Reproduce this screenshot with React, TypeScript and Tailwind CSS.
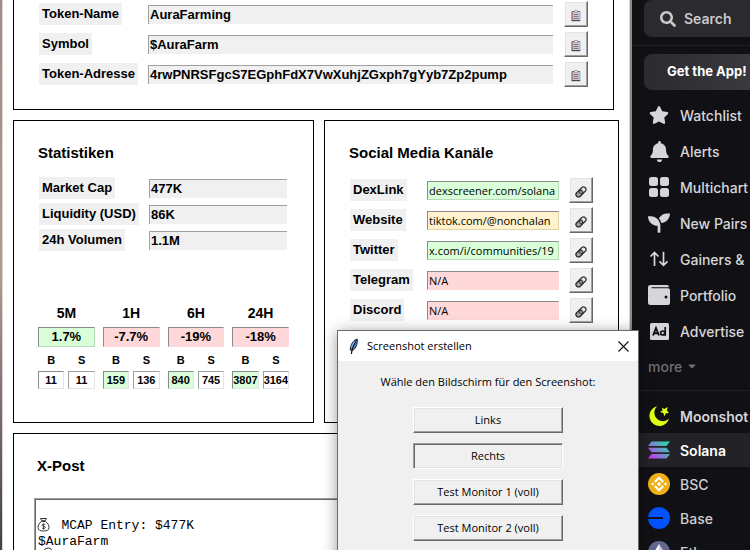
import React from "react";
import type { ReactNode } from "react";
import { FaSearch, FaStar, FaBell, FaSeedling, FaCaretDown } from "react-icons/fa";

const LABEL = "justify-self-start whitespace-nowrap bg-[#f0f0f0] px-[3px] text-[13px] leading-[22px] font-bold";
const FIELD = "h-[19px] w-full min-w-0 border-t border-l border-[#a0a0a0] bg-[#f0f0f0] px-px text-[13px] leading-[18px] font-bold outline-none";
const RAISED =
  "flex items-center justify-center bg-[#f0f0f0] border border-t-white border-l-white border-r-[#696969] border-b-[#696969] shadow-[inset_-1px_-1px_0_#a0a0a0,inset_1px_1px_0_#e3e3e3]";
const SUNKEN =
  "flex items-center justify-center bg-[#f0f0f0] border border-t-[#a0a0a0] border-l-[#a0a0a0] border-r-white border-b-white shadow-[inset_1px_1px_0_#696969,inset_-1px_-1px_0_#e3e3e3]";
const HEADING = "text-[15px] leading-5 font-bold";

function ClipboardIcon() {
  return (
    <svg width="10" height="12" viewBox="0 0 10 12" fill="none" aria-hidden="true">
      <path d="M1 2h8v9H1z" fill="#d3c6cd" />
      <path d="M1 1.500v9.500" stroke="#7b4a45" />
      <path d="M9 1.500v9.500" stroke="#7fb4e4" />
      <path d="M1 1.500h8" stroke="#76707a" />
      <path d="M3.500.500h3v2h-3z" fill="#f0f0f0" stroke="#8a8690" strokeWidth="0.700" />
      <path d="M2.500 4.500h5M2.500 6.500h5M2.500 8.500h5" stroke="#77707c" strokeWidth="0.900" />
      <path d="M1 10.700h8" stroke="#2a2a33" />
    </svg>
  );
}

function LinkIcon() {
  return (
    <svg width="12" height="12" viewBox="0 0 12 12" fill="none" aria-hidden="true">
      <g transform="rotate(-45 6 6)">
        <rect x="0" y="3.500" width="7.500" height="5" rx="2.500" fill="#a9a39c" stroke="#2a2a2e" strokeWidth="1.300" />
        <rect x="4.500" y="3.500" width="7.500" height="5" rx="2.500" stroke="#37332f" strokeWidth="1.300" />
        <path d="M3 6h6" stroke="#7a8ea0" strokeWidth="1.100" />
      </g>
    </svg>
  );
}

const token = [
  { id: "name", label: "Token-Name", value: "AuraFarming" },
  { id: "symbol", label: "Symbol", value: "$AuraFarm" },
  { id: "address", label: "Token-Adresse", value: "4rwPNRSFgcS7EGphFdX7VwXuhjZGxph7gYyb7Zp2pump" },
];

function TokenPanel() {
  return (
    <section className="mr-[5px] flex flex-col gap-1 border-x border-b border-black pt-px pr-[25px] pb-[22px] pl-[25px]">
      {token.map((t) => (
        <div key={t.id} className="grid h-[26px] grid-cols-[109px_1fr_35px] items-center">
          <label htmlFor={t.id} className={LABEL}>{t.label}</label>
          <input id={t.id} readOnly value={t.value} className={FIELD} />
          <button type="button" aria-label={`${t.label} kopieren`} className={`${RAISED} h-[26px] w-6 justify-self-end pt-1`}>
            <ClipboardIcon />
          </button>
        </div>
      ))}
    </section>
  );
}

const stats = [
  { id: "mcap", label: "Market Cap", value: "477K" },
  { id: "liq", label: "Liquidity (USD)", value: "86K" },
  { id: "vol", label: "24h Volumen", value: "1.1M" },
];

const periods = [
  { name: "5M", change: "1.7%", up: true, buys: "11", sells: "11", buyLead: false },
  { name: "1H", change: "-7.7%", up: false, buys: "159", sells: "136", buyLead: true },
  { name: "6H", change: "-19%", up: false, buys: "840", sells: "745", buyLead: true },
  { name: "24H", change: "-18%", up: false, buys: "3807", sells: "3164", buyLead: true },
];

function StatsPanel() {
  return (
    <section className="border border-black px-6 pt-[22px] pb-[33px]">
      <h2 className={HEADING}>Statistiken</h2>
      <div className="mt-[14px] flex flex-col gap-1 pr-[2px] pl-px">
        {stats.map((s) => (
          <div key={s.id} className="grid grid-cols-[110px_1fr] items-center">
            <label htmlFor={s.id} className={LABEL}>{s.label}</label>
            <input id={s.id} readOnly value={s.value} className={FIELD} />
          </div>
        ))}
      </div>
      <div className="mt-[53px] grid grid-cols-4 gap-2 text-center font-bold">
        {periods.map((p) => (
          <div key={p.name} className="min-w-0">
            <h3 className="text-[14px] leading-[18px]">{p.name}</h3>
            <output
              className={`mt-[5px] block h-5 border border-t-[#8b8b8b] border-l-[#8b8b8b] text-[13px] leading-[18px] ${
                p.up ? "border-r-[#b8dcb8] border-b-[#b8dcb8] bg-[#d9ffd9]" : "border-r-[#ffd9d9] border-b-[#ffd9d9] bg-[#ffd9d9]"
              }`}
            >
              {p.change}
            </output>
            <div className="mt-[5px] grid grid-cols-2 gap-x-1 text-[11px]">
              <span className="leading-4">B</span>
              <span className="leading-4">S</span>
              <output
                className={`mt-[3px] h-[18px] overflow-hidden border border-t-[#8b8b8b] border-l-[#8b8b8b] border-r-[#e3e3e3] border-b-[#e3e3e3] leading-4 ${
                  p.buyLead ? "bg-[#d9ffd9]" : "bg-white"
                }`}
              >
                {p.buys}
              </output>
              <output className="mt-[3px] h-[18px] overflow-hidden border border-t-[#a0a0a0] border-l-[#a0a0a0] border-r-[#e3e3e3] border-b-[#e3e3e3] bg-white leading-4">
                {p.sells}
              </output>
            </div>
          </div>
        ))}
      </div>
    </section>
  );
}

const socials = [
  { id: "dex", label: "DexLink", value: "dexscreener.com/solana", tone: "bg-[#d9ffd9] border-r-[#b8dcb8] border-b-[#b8dcb8]" },
  { id: "web", label: "Website", value: "tiktok.com/@nonchalan", tone: "bg-[#fff2cc] border-r-[#e0d3a8] border-b-[#e0d3a8]" },
  { id: "tw", label: "Twitter", value: "x.com/i/communities/19", tone: "bg-[#d9ffd9] border-r-[#b8dcb8] border-b-[#b8dcb8]" },
  { id: "tg", label: "Telegram", value: "N/A", tone: "bg-[#ffd9d9] border-r-[#ffd9d9] border-b-[#ffd9d9]" },
  { id: "dc", label: "Discord", value: "N/A", tone: "bg-[#ffd9d9] border-r-[#ffd9d9] border-b-[#ffd9d9]" },
];

function SocialPanel() {
  return (
    <section className="border border-black pt-[22px] pr-[25px] pl-6">
      <h2 className={HEADING}>Social Media Kanäle</h2>
      <div className="mt-[14px] flex flex-col gap-1 pl-px">
        {socials.map((s) => (
          <div key={s.id} className="grid h-[26px] grid-cols-[77px_1fr_34px] items-center">
            <label htmlFor={s.id} className={LABEL}>{s.label}</label>
            <input
              id={s.id}
              readOnly
              value={s.value}
              className={`h-[19px] w-full min-w-0 border border-t-[#8b8b8b] border-l-[#8b8b8b] pl-px font-['Open_Sans',sans-serif] text-[11px] leading-[17px] outline-none ${s.tone}`}
            />
            <button type="button" aria-label={`${s.label} öffnen`} className={`${RAISED} h-[26px] w-6 justify-self-end pt-1`}>
              <LinkIcon />
            </button>
          </div>
        ))}
      </div>
    </section>
  );
}

function PostPanel() {
  return (
    <section className="border border-b-0 border-black px-5 pt-[22px]">
      <h2 className={`${HEADING} pl-[3px]`}>X-Post</h2>
      <div className="relative mt-[22px]">
        <textarea
          aria-label="X-Post Text"
          readOnly
          value={"\n   MCAP Entry: $477K\n$AuraFarm"}
          className="block h-40 w-full resize-none border border-[#a0a0a0] px-[3px] py-[3px] font-['Liberation_Mono',monospace] text-[13px] leading-4 shadow-[inset_1px_1px_0_#696969] outline-none"
        />
        <svg className="absolute top-[19px] left-[3px]" width="18" height="48" viewBox="0 0 18 48" fill="none" stroke="#333" aria-hidden="true">
          <path d="M3.500 1.500h6l-1.200 2.200h-3.600z" />
          <path d="M4.500 4.500C2 6 1 8.500 1 10.500 1 13 3 14 6.500 14S12 13 12 10.500C12 8.500 11 6 8.500 4.500z" />
          <path d="M8.300 7.600c-1-.8-3.300-.6-3.300.6 0 1.400 3.300.7 3.300 2.200 0 1.200-2.300 1.400-3.500.5M6.600 6.400v6.200" strokeWidth="0.900" />
          <circle cx="11" cy="36" r="5" />
        </svg>
      </div>
    </section>
  );
}

function Feather() {
  return (
    <svg width="12" height="17" viewBox="0 0 12 17" aria-hidden="true">
      <path d="M9.200 1C5.500 2 2.300 6.500 2.200 12l1.600.8C7.500 11.500 10 6 9.200 1z" fill="#3f7fc8" stroke="#16202c" strokeWidth="0.900" />
      <path d="M8.600 2C6 5.500 4 9.500 3.400 16" stroke="#101010" strokeWidth="1.200" fill="none" />
      <path d="M7 3.500C5 5.500 4 7.500 3.500 9.500" stroke="#a8d0f5" fill="none" />
    </svg>
  );
}

const choices = [
  { text: "Links", pressed: false },
  { text: "Rechts", pressed: true },
  { text: "Test Monitor 1 (voll)", pressed: false },
  { text: "Test Monitor 2 (voll)", pressed: false },
];

function ScreenshotDialog() {
  return (
    <div
      role="dialog"
      aria-labelledby="dialog-title"
      className="absolute top-[330px] left-[337px] h-[300px] w-[302px] border border-[#6b6b6b] bg-[#f0f0f0] font-['Open_Sans',sans-serif] text-[11px] text-black shadow-[0_2px_14px_rgba(0,0,0,0.4)]"
    >
      <div className="flex h-[30px] items-center bg-white pr-[9px] pl-[10px]">
        <Feather />
        <h2 id="dialog-title" className="ml-[7px] flex-1">Screenshot erstellen</h2>
        <button type="button" aria-label="Schließen">
          <svg width="11" height="11" viewBox="0 0 11 11" aria-hidden="true">
            <path d="M.5.5l10 10M10.500.5l-10 10" stroke="#111" strokeWidth="1.100" />
          </svg>
        </button>
      </div>
      <p className="mt-3 text-center leading-[18px]">Wähle den Bildschirm für den Screenshot:</p>
      <div className="mt-4 flex flex-col items-center gap-[10px]">
        {choices.map((c) => (
          <button key={c.text} type="button" className={`${c.pressed ? SUNKEN : RAISED} h-[26px] w-[150px]`}>
            {c.text}
          </button>
        ))}
      </div>
    </div>
  );
}

function GridIcon() {
  return (
    <svg width="20" height="20" viewBox="0 0 20 20" fill="currentColor" aria-hidden="true">
      <rect width="9" height="9" rx="2.500" />
      <rect x="11" width="9" height="9" rx="2.500" />
      <rect y="11" width="9" height="9" rx="2.500" />
      <rect x="11" y="11" width="9" height="9" rx="2.500" />
    </svg>
  );
}

function ArrowsIcon() {
  return (
    <svg width="20" height="16" viewBox="0 0 20 16" fill="none" stroke="currentColor" strokeWidth="1.700" aria-hidden="true">
      <path d="M5.500 15V1.500M1.500 5.500l4-4 4 4M14.500.800V14.300M10.500 10.300l4 4 4-4" />
    </svg>
  );
}

function WalletIcon() {
  return (
    <svg width="22" height="20" viewBox="0 0 22 20" aria-hidden="true">
      <path d="M2.500 0H19q2 0 2 2.200H3.500v1H20q2 0 2 2V18q0 2-2 2H2.500Q0 20 0 17.500v-15Q0 0 2.500 0z" fill="currentColor" />
      <circle cx="18" cy="12" r="1.500" fill="#111015" />
    </svg>
  );
}

function AdIcon() {
  return (
    <svg width="19" height="17" viewBox="0 0 19 17" aria-hidden="true">
      <rect width="19" height="17" rx="1.500" fill="currentColor" />
      <path d="M3 12.500L6 5l3 7.500M4 10.300h4" fill="none" stroke="#111015" strokeWidth="1.900" />
      <circle cx="12.700" cy="10" r="2" fill="none" stroke="#111015" strokeWidth="1.700" />
      <path d="M15.200 4v8.800" stroke="#111015" strokeWidth="1.700" />
    </svg>
  );
}

function MoonIcon() {
  return (
    <svg width="22" height="22" viewBox="0 0 22 22" fill="#dfff16" aria-hidden="true">
      <path d="M9 1.200A10 10 0 1 0 21 13.800 7.700 7.700 0 0 1 9 1.200z" />
      <path d="M14 2.800l2.300 1.100L19.700 2l-.8 3.600L21 8l-3 .2-1.700 3-1-3.200L12 7l2.500-1.600z" />
    </svg>
  );
}

function SolanaIcon() {
  return (
    <svg width="22" height="18" viewBox="0 0 22 18" aria-hidden="true">
      <defs>
        <linearGradient id="sol" x1="2" y1="18" x2="20" y2="0" gradientUnits="userSpaceOnUse">
          <stop offset="0.050" stopColor="#c33af0" />
          <stop offset="0.500" stopColor="#6f8fc8" />
          <stop offset="1" stopColor="#1fe0a8" />
        </linearGradient>
      </defs>
      <path d="M3.500.5H22L18.500 5H0zM0 6.800h18.500L22 11.300H3.500zM3.500 13H22l-3.500 4.500H0z" fill="url(#sol)" />
    </svg>
  );
}

function BscIcon() {
  return (
    <svg width="22" height="22" viewBox="0 0 22 22" aria-hidden="true">
      <circle cx="11" cy="11" r="11" fill="#f0b016" />
      <path d="M6.800 9L11 4.800 15.200 9M6.800 13l4.200 4.200 4.200-4.200" fill="none" stroke="#fff" strokeWidth="2.200" />
      <path d="M11 8.800l2.200 2.200-2.200 2.200L8.800 11zM4.600 9.400L6.200 11l-1.600 1.600L3 11zM17.400 9.400L19 11l-1.600 1.600-1.600-1.600z" fill="#fff" />
    </svg>
  );
}

function BaseIcon() {
  return (
    <svg width="22" height="22" viewBox="0 0 22 22" aria-hidden="true">
      <circle cx="11" cy="11" r="11" fill="#0052ff" />
      <path d="M0 10h15v2H0z" fill="#101420" />
    </svg>
  );
}

function EthIcon() {
  return (
    <svg width="22" height="22" viewBox="0 0 22 22" aria-hidden="true">
      <circle cx="11" cy="11" r="11" fill="#62688f" />
      <path d="M11 3l5 8.500-5 3-5-3z" fill="#fff" />
      <path d="M11 3l5 8.500-5 3z" fill="#c9cce0" />
    </svg>
  );
}

const menu: { text: string; icon: ReactNode }[] = [
  { text: "Watchlist", icon: <FaStar size={20} /> },
  { text: "Alerts", icon: <FaBell size={21} /> },
  { text: "Multichart", icon: <GridIcon /> },
  { text: "New Pairs", icon: <FaSeedling size={22} /> },
  { text: "Gainers &", icon: <ArrowsIcon /> },
  { text: "Portfolio", icon: <WalletIcon /> },
  { text: "Advertise", icon: <AdIcon /> },
];

const chains: { text: string; icon: ReactNode; style: string }[] = [
  { text: "Moonshot", icon: <MoonIcon />, style: "font-semibold text-[#d6d6d9]" },
  { text: "Solana", icon: <SolanaIcon />, style: "bg-[#232227] font-semibold text-white" },
  { text: "BSC", icon: <BscIcon />, style: "text-[#cfcfd2]" },
  { text: "Base", icon: <BaseIcon />, style: "text-[#cfcfd2]" },
  { text: "Ethereum", icon: <EthIcon />, style: "text-[#cfcfd2]" },
];

function Sidebar() {
  return (
    <aside className="w-[118px] shrink-0 overflow-hidden bg-[#111015] font-['Inter',sans-serif] text-[14px] font-medium whitespace-nowrap text-[#d6d6d9]">
      <div className="pl-3">
        <button type="button" className="flex h-[37px] w-full items-center gap-2 rounded-l-lg bg-[#2b2a2f] pl-4 font-semibold text-[#c9c9cc]">
          <FaSearch size={16} />
          Search
        </button>
      </div>
      <div className="mt-2 border-t border-[#222126] pt-2 pl-3">
        <button type="button" className="flex h-9 w-full items-center rounded-l-lg bg-linear-to-r from-[#2b2a2f] to-[#3a393e] pl-[23px] text-[13px] font-bold text-white">
          Get the App!
        </button>
      </div>
      <nav className="mt-[7px]">
        {menu.map((m) => (
          <a key={m.text} href="#" className="flex h-9 items-center gap-[10px] pl-4">
            <span className="flex w-[22px] shrink-0 justify-center">{m.icon}</span>
            {m.text}
          </a>
        ))}
      </nav>
      <button type="button" className="flex h-[34px] items-center gap-1 pl-4 text-[#6f6e74]">
        more
        <FaCaretDown size={12} />
      </button>
      <nav className="mt-[7px] border-t border-[#222126] pt-2">
        {chains.map((c) => (
          <a key={c.text} href="#" className={`flex h-[34px] items-center gap-[10px] pl-4 ${c.style}`}>
            <span className="flex w-[22px] shrink-0 justify-center">{c.icon}</span>
            {c.text}
          </a>
        ))}
      </nav>
    </aside>
  );
}

export default function App() {
  return (
    <div className="relative flex h-screen overflow-hidden bg-white font-['Liberation_Sans',Arial,sans-serif] text-black">
      <div className="w-[3px] shrink-0 border-r border-[#d8d8d8] bg-linear-to-b from-[#a98784] via-[#b09a90] to-[#4a4040]" />
      <main className="flex min-w-0 flex-1 flex-col gap-[10px] pr-[10px] pl-[10px]">
        <TokenPanel />
        <div className="grid grid-cols-[301fr_295fr] gap-[10px]">
          <StatsPanel />
          <SocialPanel />
        </div>
        <PostPanel />
      </main>
      <div className="w-[3px] shrink-0 border-l border-[#d4d2ce] bg-[#8f8b84]" />
      <Sidebar />
      <ScreenshotDialog />
    </div>
  );
}
